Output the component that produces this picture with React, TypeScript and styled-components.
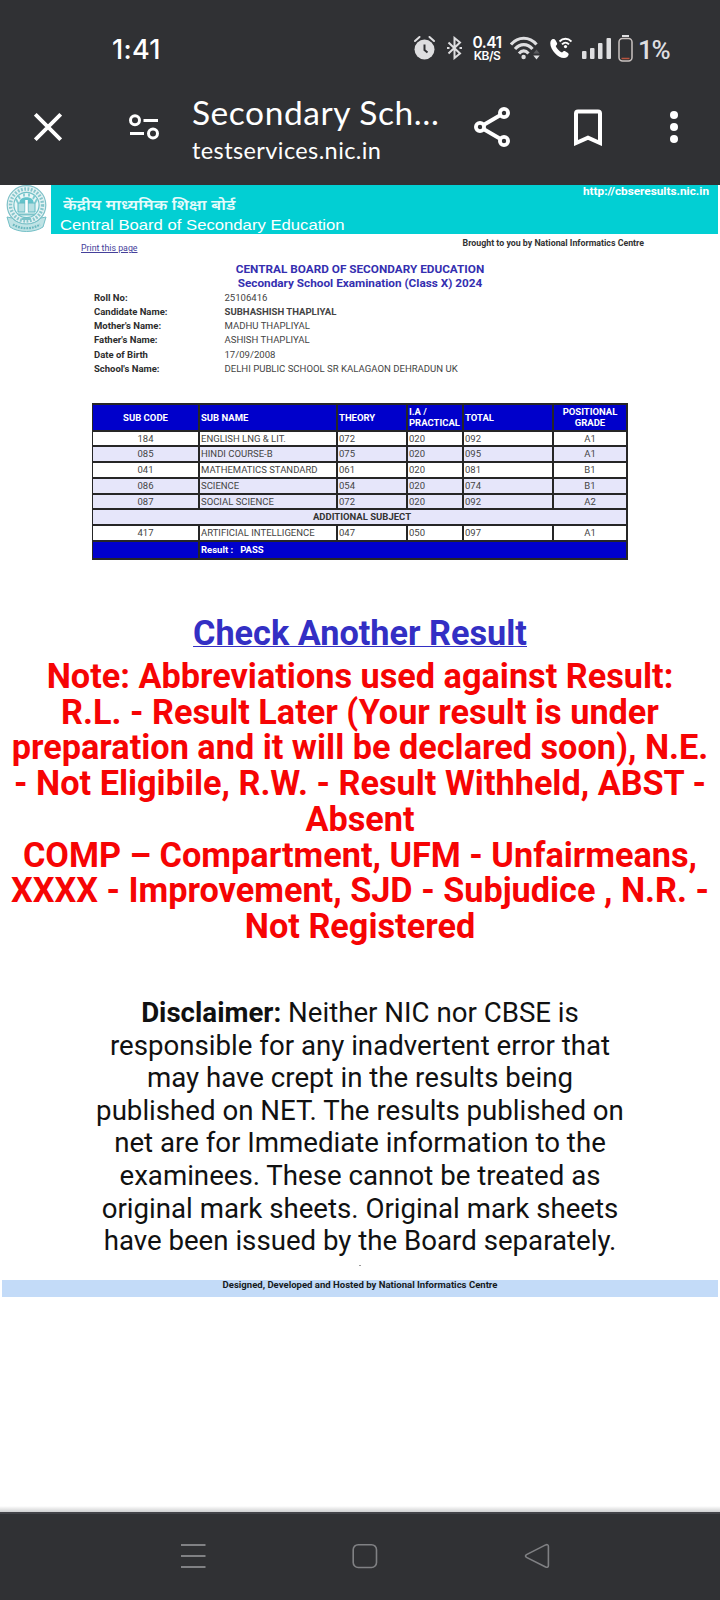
import React from "react";
import styled, { createGlobalStyle } from "styled-components";

const GlobalStyle = createGlobalStyle`
  * { box-sizing: border-box; }
  html, body { margin: 0; padding: 0; background: #fff; }
  body { width: 720px; height: 1600px; overflow: hidden; font-family: Roboto, "Liberation Sans", sans-serif; }
`;

const Screen = styled.div`
  display: flex;
  flex-direction: column;
  width: 720px;
  height: 1600px;
  background: #fff;
`;

const BrowserChrome = styled.header`
  height: 185px;
  flex: none;
  background: #303134;
  color: #fff;
`;

const StatusBar = styled.div`
  display: flex;
  align-items: center;
  height: 98px;
  padding: 0 50px 2px 112px;
`;

const Clock = styled.div`
  flex: 1;
  font: 500 27px/30px Inter, Roboto, sans-serif;
  letter-spacing: 0.3px;
  padding-top: 4px;
`;

const StatusIcon = styled.svg<{ $gap: number }>`
  flex: none;
  display: block;
  margin-right: ${(p) => p.$gap}px;
`;

const NetSpeed = styled.div`
  width: 30px;
  margin-right: 8px;
  padding-top: 2px;
  text-align: center;
  font: 600 15.5px/14px Inter, Roboto, sans-serif;
  letter-spacing: -0.5px;
  white-space: nowrap;
  small { display: block; font-size: 12px; line-height: 12px; font-weight: 600; letter-spacing: -0.5px; }
`;

const Battery = styled.div`
  width: 32px;
  font: 500 26px/30px Roboto, sans-serif;
  color: #dedee0;
  white-space: nowrap;
  letter-spacing: -1.4px;
  padding-top: 4px;
`;

const Toolbar = styled.div`
  display: flex;
  align-items: center;
  height: 58px;
  padding: 0 0 0 34px;
`;

const ToolIcon = styled.svg<{ $gap: number }>`
  flex: none;
  display: block;
  margin-right: ${(p) => p.$gap}px;
`;

const TitleBlock = styled.div`
  width: 282px;
  flex: none;
  padding-top: 3px;
  white-space: nowrap;
`;

const TabTitle = styled.div`
  font: 400 33.5px/38px Lato, sans-serif;
  letter-spacing: 0.55px;
`;

const TabHost = styled.div`
  font: 400 23.5px/30px Lato, sans-serif;
  letter-spacing: 0.4px;
  margin-top: 4px;
`;

const Banner = styled.div`
  display: flex;
  height: 49px;
  flex: none;
  padding-right: 2px;
`;

const BannerLogo = styled.div`
  width: 51px;
  padding-left: 6px;
  svg { display: block; }
`;

const BannerBody = styled.div`
  flex: 1;
  display: flex;
  justify-content: space-between;
  background: #02cfd3;
  color: #fff;
  padding: 0 9px;
  white-space: nowrap;
`;

const BoardNames = styled.div`
  padding-top: 13px;
`;

const HindiName = styled.div`
  font: 600 14px/18px "Noto Sans Devanagari", "Noto Sans", sans-serif;
  height: 18px;
  margin-left: 3px;
  color: #e6fbfb;
  transform: scaleX(1.21);
  transform-origin: 0 50%;
`;

const EnglishName = styled.div`
  font: 400 14.5px/18px "Liberation Sans", sans-serif;
  transform: scaleX(1.15);
  transform-origin: 0 50%;
`;

const BannerUrl = styled.div`
  font-weight: 700;
  font-size: 11.8px;
  line-height: 12px;
`;

const SubBar = styled.div`
  display: flex;
  justify-content: space-between;
  height: 28px;
  flex: none;
  padding: 4px 76px 0 81px;
`;

const PrintLink = styled.a`
  font-size: 8.8px;
  line-height: 11px;
  margin-top: 5px;
  color: #45409a;
  text-decoration: underline;
`;

const Credit = styled.div`
  font-size: 8.82px;
  line-height: 11px;
  font-weight: 700;
  color: #333;
`;

const Heading = styled.div`
  height: 28px;
  flex: none;
  text-align: center;
  font-size: 11.78px;
  line-height: 14px;
  font-weight: 700;
  color: #352fb0;
  white-space: pre-line;
`;

const Details = styled.dl`
  display: grid;
  grid-template-columns: 130.5px 1fr;
  grid-auto-rows: 14.3px;
  flex: none;
  margin: 0;
  padding: 0.5px 0 0 94px;
  height: 113px;
  font-size: 9.57px;
  line-height: 14.3px;
  color: #444;
  dt { font-weight: 700; color: #2d2d2d; font-size: 9.5px; }
  dd { margin: 0; }
`;

const Marks = styled.div`
  display: grid;
  grid-template-columns: 105px 136px 68px 54px 88px 72px;
  grid-template-rows: 25px 13px 14px 14px 14px 13px 14px 14px 16px;
  gap: 2px;
  flex: none;
  width: 536px;
  margin: 0 0 0 92px;
  padding: 2px 1px;
  background: #262626;
  font-size: 9.5px;
`;

type CellProps = { $tone: "white" | "tint" | "blue"; $center?: boolean; $span?: number };

const Cell = styled.div<CellProps>`
  display: flex;
  align-items: center;
  justify-content: ${(p) => (p.$center ? "center" : "flex-start")};
  text-align: ${(p) => (p.$center ? "center" : "left")};
  grid-column: span ${(p) => p.$span ?? 1};
  padding: 0 1px 1px ${(p) => (p.$span === 6 ? 6 : 1)}px;
  line-height: 11px;
  white-space: pre;
  background: ${(p) => (p.$tone === "blue" ? "#0000cb" : p.$tone === "tint" ? "#e6e6fa" : "#fff")};
  color: ${(p) => (p.$tone === "blue" ? "#fff" : "#444")};
  font-weight: ${(p) => (p.$tone === "blue" ? 700 : 400)};
  b { color: #333; }
`;

const CheckLink = styled.a`
  align-self: center;
  flex: none;
  margin-top: 54px;
  font-size: 34.25px;
  line-height: 38px;
  font-weight: 700;
  color: #332fc4;
  text-decoration: underline;
  text-decoration-thickness: 1px;
  text-underline-offset: 1px;
  text-decoration-skip-ink: none;
  white-space: nowrap;
`;

const Note = styled.p`
  flex: none;
  margin: 7px 0 0;
  text-align: center;
  font-size: 34.25px;
  line-height: 35.7px;
  font-weight: 700;
  color: #f60404;
  white-space: pre;
`;

const Disclaimer = styled.p`
  flex: none;
  margin: 52.6px 0 0;
  text-align: center;
  font-size: 27.65px;
  line-height: 32.55px;
  color: #111;
  white-space: pre;
`;

const Speck = styled.div`
  flex: none;
  align-self: center;
  width: 2px;
  height: 1px;
  margin-top: 7px;
  background: #999;
`;

const FootBar = styled.footer`
  flex: none;
  height: 17px;
  margin: 14px 2px 0;
  background: #c3dbf8;
  text-align: center;
  font-size: 9.56px;
  line-height: 10px;
  font-weight: 700;
  color: #151a22;
`;

const BottomShade = styled.div`
  margin-top: auto;
  flex: none;
  height: 6px;
  background: linear-gradient(#fff, #cfd0d1);
`;

const NavBar = styled.nav`
  flex: none;
  display: flex;
  justify-content: space-between;
  height: 88px;
  padding: 29px 170px 0 180px;
  background: #303134;
  border-top: 2px solid #424348;
`;

const subjects = [
  ["184", "ENGLISH LNG & LIT.", "072", "020", "092", "A1"],
  ["085", "HINDI COURSE-B", "075", "020", "095", "A1"],
  ["041", "MATHEMATICS STANDARD", "061", "020", "081", "B1"],
  ["086", "SCIENCE", "054", "020", "074", "B1"],
  ["087", "SOCIAL SCIENCE", "072", "020", "092", "A2"],
];
const tones: CellProps["$tone"][] = ["white", "tint", "white", "tint", "tint"];

function SubjectRow({ row, tone }: { row: string[]; tone: CellProps["$tone"] }) {
  return (
    <>
      {row.map((text, i) => (
        <Cell key={i} $tone={tone} $center={i === 0 || i === 5}>{text}</Cell>
      ))}
    </>
  );
}

const details = [
  ["Roll No:", "25106416"],
  ["Candidate Name:", "SUBHASHISH THAPLIYAL"],
  ["Mother's Name:", "MADHU THAPLIYAL"],
  ["Father's Name:", "ASHISH THAPLIYAL"],
  ["Date of Birth", "17/09/2008"],
  ["School's Name:", "DELHI PUBLIC SCHOOL SR KALAGAON DEHRADUN UK"],
];

const noteText = `Note: Abbreviations used against Result:
R.L. - Result Later (Your result is under
preparation and it will be declared soon), N.E.
- Not Eligibile, R.W. - Result Withheld, ABST -
Absent
COMP – Compartment, UFM - Unfairmeans,
XXXX - Improvement, SJD - Subjudice , N.R. -
Not Registered`;

const disclaimerText = ` Neither NIC nor CBSE is
responsible for any inadvertent error that
may have crept in the results being
published on NET. The results published on
net are for Immediate information to the
examinees. These cannot be treated as
original mark sheets. Original mark sheets
have been issued by the Board separately.`;

function StatusIcons() {
  return (
    <>
      <StatusIcon $gap={12} width="21" height="24" viewBox="0 0 21 24" fill="none">
        <circle cx="10.5" cy="13.5" r="10" fill="#dedee0" />
        <path d="M1 5 L5.5 1 M20 5 L15.5 1" stroke="#dedee0" strokeWidth="2" strokeLinecap="round" />
        <path d="M10.5 8.5 V14 L13.5 16.5" stroke="#303134" strokeWidth="2" />
      </StatusIcon>
      <StatusIcon $gap={10} width="15" height="24" viewBox="0 0 15 24" fill="none" stroke="#dedee0" strokeWidth="2">
        <path d="M1.5 6.5 L13 17.5 L7.5 22 V2 L13 6.5 L1.5 17.5" />
        <path d="M0 12h2.500M12.5 12H15" />
      </StatusIcon>
      <NetSpeed>0.41<small>KB/S</small></NetSpeed>
      <StatusIcon $gap={10} width="30" height="24" viewBox="0 0 30 24" fill="none" stroke="#dedee0" strokeWidth="3.100">
        <path d="M1 8.5 C8 .2 19.500 .2 26.500 8.500" />
        <path d="M5 13 C10 7.200 17.500 7.200 22.500 13" />
        <path d="M9 17.500 C12 14 15.500 14 18.500 17.500" />
        <circle cx="13.600" cy="21" r="2.200" fill="#dedee0" stroke="none" />
        <path d="M23.300 17.500 L26.500 13.500 L29.700 17.500Z" fill="#5c5d60" stroke="none" />
        <path d="M23.300 19.500 L26.500 23.500 L29.700 19.500Z" fill="#dedee0" stroke="none" />
      </StatusIcon>
      <StatusIcon $gap={10} width="22" height="22" viewBox="0 0 22 22" fill="none">
        <path d="M1 3.600 C2.500 1.600 4.500 1.800 5.500 3.200 L7 6 C7.500 7.200 6.500 8.200 5.700 9 C6.800 11.800 9.300 14.300 12 15.600 C13 14.500 14 13.700 15.200 14.300 L18 15.900 C19.200 17 18.600 18.700 17.200 20 C13.800 22.500 8.500 20 5 16.200 C1.500 12.500 -1 7 1 3.600Z" fill="#fff" />
        <path d="M9.500 4.500 C13 .8 18 .8 21.500 4.500 M12 7.400 C14.300 5 16.700 5 19 7.400" stroke="#fff" strokeWidth="1.900" />
        <circle cx="15.500" cy="9.600" r="1.600" fill="#fff" />
      </StatusIcon>
      <StatusIcon $gap={7} width="29" height="21" viewBox="0 0 29 21" fill="#dedee0">
        <rect x="0" y="13" width="4.500" height="8" rx="1" />
        <rect x="8" y="10" width="4.500" height="11" rx="1" />
        <rect x="16" y="5" width="4.500" height="16" rx="1" />
        <rect x="24.500" y="0" width="4.500" height="21" rx="1" />
      </StatusIcon>
      <StatusIcon $gap={5} width="15" height="27" viewBox="0 0 15 27" fill="none">
        <rect x="4" y="0" width="7" height="2" fill="#dedee0" />
        <rect x="1" y="3.500" width="13" height="22.500" rx="3.500" stroke="#c9c2c0" strokeWidth="1.500" />
        <path d="M3.500 23.500h8" stroke="#b8543f" strokeWidth="1.500" />
      </StatusIcon>
      <Battery>1%</Battery>
    </>
  );
}

function Emblem() {
  return (
    <svg width="41" height="47" viewBox="0 0 41 47" fill="none">
      <circle cx="20.500" cy="20" r="19.300" fill="#e3f2f3" stroke="#7fc1c8" strokeWidth="1.200" />
      <circle cx="20.500" cy="20" r="16" stroke="#86c6cc" strokeWidth="3.400" strokeDasharray="1.800 1.500" />
      <circle cx="20.500" cy="20" r="12.600" fill="#eaf7f7" stroke="#6fc0c7" strokeWidth="1.200" />
      <path d="M12 18 L10 14 M14 14 L12 10 M18 11.500V8.500 M23 11.500V8.500 M27 14 L29 10 M29 18 L31 14" stroke="#7fcad0" strokeWidth="1.800" />
      <path d="M13.500 26 V17 C13.500 10.500 27.500 10.500 27.500 17 V26Z" fill="#62c3cb" />
      <path d="M12 18h7v9h-7zM22 18h7v9h-7z" fill="#b5e0e3" stroke="#62bac2" />
      <path d="M20.500 15v12" stroke="#fff" strokeWidth="2.600" />
      <path d="M12 29.500h17M16 34h9" stroke="#7cc3c9" strokeWidth="1.800" />
      <path d="M1 32 L6 33 C13 41 28 41 35 33 L40 32 L37 42 C28 48 13 48 4 42Z" fill="#bfe3e5" stroke="#74bfc6" />
      <path d="M7 39.500 C15 44.500 26 44.500 34 39.500" stroke="#6bb8bf" strokeWidth="2.200" strokeDasharray="1.800 1" />
    </svg>
  );
}

export default function App() {
  return (
    <Screen>
      <GlobalStyle />
      <BrowserChrome>
        <StatusBar>
          <Clock>1:41</Clock>
          <StatusIcons />
        </StatusBar>
        <Toolbar>
          <ToolIcon $gap={67} width="28" height="28" viewBox="0 0 28 28" stroke="#fff" strokeWidth="3.800">
            <path d="M1.300 1.300 L26.700 26.700 M26.700 1.300 L1.300 26.700" />
          </ToolIcon>
          <ToolIcon $gap={33} width="30" height="26" viewBox="0 0 30 26" fill="none" stroke="#fff" strokeWidth="3">
            <circle cx="6" cy="6.200" r="4.500" />
            <circle cx="24" cy="19.500" r="4.500" />
            <path d="M14.500 6.500H29M1 19.500H15" />
          </ToolIcon>
          <TitleBlock>
            <TabTitle>Secondary Sch…</TabTitle>
            <TabHost>testservices.nic.in</TabHost>
          </TitleBlock>
          <ToolIcon $gap={64} width="36" height="40" viewBox="0 0 36 40" fill="none" stroke="#fff" strokeWidth="3.800">
            <path d="M6 20 L30 6 M6 20 L30 34" />
            <circle cx="6" cy="20" r="4.100" fill="#303134" />
            <circle cx="30" cy="6" r="4.100" fill="#303134" />
            <circle cx="30" cy="34" r="4.100" fill="#303134" />
          </ToolIcon>
          <ToolIcon $gap={68} width="28" height="37" viewBox="0 0 28 37" fill="none" stroke="#fff" strokeWidth="4">
            <path d="M2 34 V4.500 Q2 2.500 4 2.500 H24 Q26 2.500 26 4.500 V34 L14 28.700Z" />
          </ToolIcon>
          <ToolIcon $gap={0} width="8" height="32" viewBox="0 0 8 32" fill="#fff">
            <circle cx="4" cy="4" r="4" /><circle cx="4" cy="16" r="4" /><circle cx="4" cy="28" r="4" />
          </ToolIcon>
        </Toolbar>
      </BrowserChrome>

      <Banner>
        <BannerLogo><Emblem /></BannerLogo>
        <BannerBody>
          <BoardNames>
            <HindiName>केंद्रीय माध्यमिक शिक्षा बोर्ड</HindiName>
            <EnglishName>Central Board of Secondary Education</EnglishName>
          </BoardNames>
          <BannerUrl>http://cbseresults.nic.in</BannerUrl>
        </BannerBody>
      </Banner>

      <SubBar>
        <PrintLink>Print this page</PrintLink>
        <Credit>Brought to you by National Informatics Centre</Credit>
      </SubBar>
      <Heading>{"CENTRAL BOARD OF SECONDARY EDUCATION\nSecondary School Examination (Class X) 2024"}</Heading>
      <Details>
        {details.map(([label, value], i) => (
          <React.Fragment key={label}>
            <dt>{label}</dt>
            <dd>{i === 1 ? <b>{value}</b> : value}</dd>
          </React.Fragment>
        ))}
      </Details>

      <Marks>
        <Cell $tone="blue" $center>SUB CODE</Cell>
        <Cell $tone="blue">SUB NAME</Cell>
        <Cell $tone="blue">THEORY</Cell>
        <Cell $tone="blue">{"I.A /\nPRACTICAL"}</Cell>
        <Cell $tone="blue">TOTAL</Cell>
        <Cell $tone="blue" $center>{"POSITIONAL\nGRADE"}</Cell>
        {subjects.map((row, i) => <SubjectRow key={row[0]} row={row} tone={tones[i]} />)}
        <Cell $tone="tint" $center $span={6}><b>ADDITIONAL SUBJECT</b></Cell>
        <SubjectRow row={["417", "ARTIFICIAL INTELLIGENCE", "047", "050", "097", "A1"]} tone="white" />
        <Cell $tone="blue" />
        <Cell $tone="blue" $span={5}>{"Result :   PASS"}</Cell>
      </Marks>

      <CheckLink>Check Another Result</CheckLink>
      <Note>{noteText}</Note>
      <Disclaimer><b>Disclaimer:</b>{disclaimerText}</Disclaimer>
      <Speck />
      <FootBar>Designed, Developed and Hosted by National Informatics Centre</FootBar>

      <BottomShade />
      <NavBar>
        <svg width="26" height="26" viewBox="0 0 26 26" stroke="#808184" strokeWidth="2">
          <path d="M1 2H25.500M1 13H25.500M1 24H25.500" />
        </svg>
        <svg width="26" height="26" viewBox="0 0 26 26" fill="none" stroke="#808184" strokeWidth="1.600">
          <rect x="1.200" y="1.700" width="23.300" height="22.800" rx="5" />
        </svg>
        <svg width="26" height="26" viewBox="0 0 26 26" fill="none" stroke="#808184" strokeWidth="1.600">
          <path d="M2.500 11.600 L21.600 1.900 Q24.400 1 24.400 3.500 V22.500 Q24.400 25 21.600 24 L2.500 14.400 Q.5 13 2.500 11.600Z" />
        </svg>
      </NavBar>
    </Screen>
  );
}
